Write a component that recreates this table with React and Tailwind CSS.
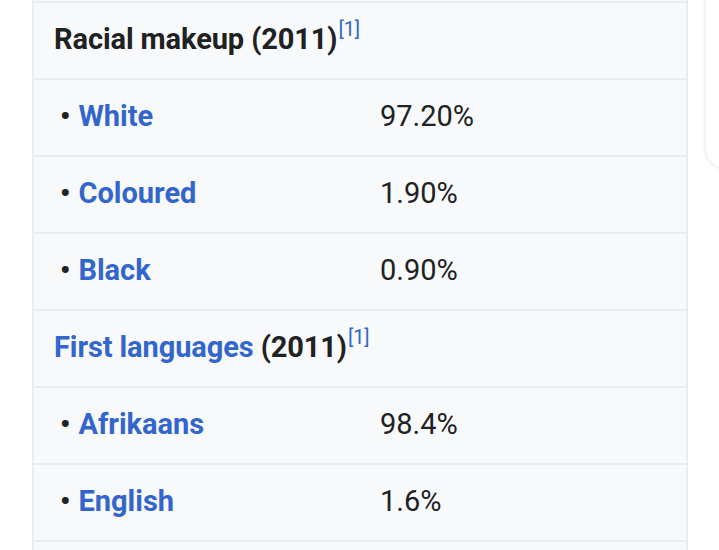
import React from "react";

const Sup = () => (
  <sup className="text-[20px] font-normal text-[#3366cc] relative -top-[13px] ml-[1px]">[1]</sup>
);

const Row = ({ label, value }) => (
  <div className="flex h-[77px] items-center border-b-2 border-[#eaecf0] pb-[2px]">
    <div className="w-[346px] pl-[26px] flex items-center">
      <span className="text-[#202122] font-bold mr-[8px]">•</span>
      <span className="font-bold text-[#3366cc]">{label}</span>
    </div>
    <div className="text-[#202122]">{value}</div>
  </div>
);

const Header = ({ children }) => (
  <div className="flex h-[77px] items-center border-b-2 border-[#eaecf0] pl-[20px] pb-[2px]">
    <div className="font-bold text-[#202122] tracking-[-0.1px]">{children}</div>
  </div>
);

export default function App() {
  return (
    <div
      className="relative w-[719px] h-[550px] bg-white overflow-hidden text-[29px] leading-none"
      style={{ fontFamily: "Roboto, 'Noto Sans', sans-serif" }}
    >
      <div className="ml-[32px] w-[656px] border-x-2 border-[#eaecf0] bg-[#f8f9fa]">
        <div className="h-[1px]" />
        <div className="h-[2px] bg-[#eaecf0]" />
        <Header>
          Racial makeup (2011)
          <Sup />
        </Header>
        <Row label="White" value="97.20%" />
        <Row label="Coloured" value="1.90%" />
        <Row label="Black" value="0.90%" />
        <Header>
          <span className="text-[#3366cc]">First languages</span> (2011)
          <Sup />
        </Header>
        <Row label="Afrikaans" value="98.4%" />
        <Row label="English" value="1.6%" />
        <div className="h-[20px]" />
      </div>
      <div className="absolute left-[706px] -top-[20px] w-[40px] h-[188px] bg-white rounded-bl-[20px] shadow-[0_0_5px_rgba(0,0,0,0.15)]" />
    </div>
  );
}
